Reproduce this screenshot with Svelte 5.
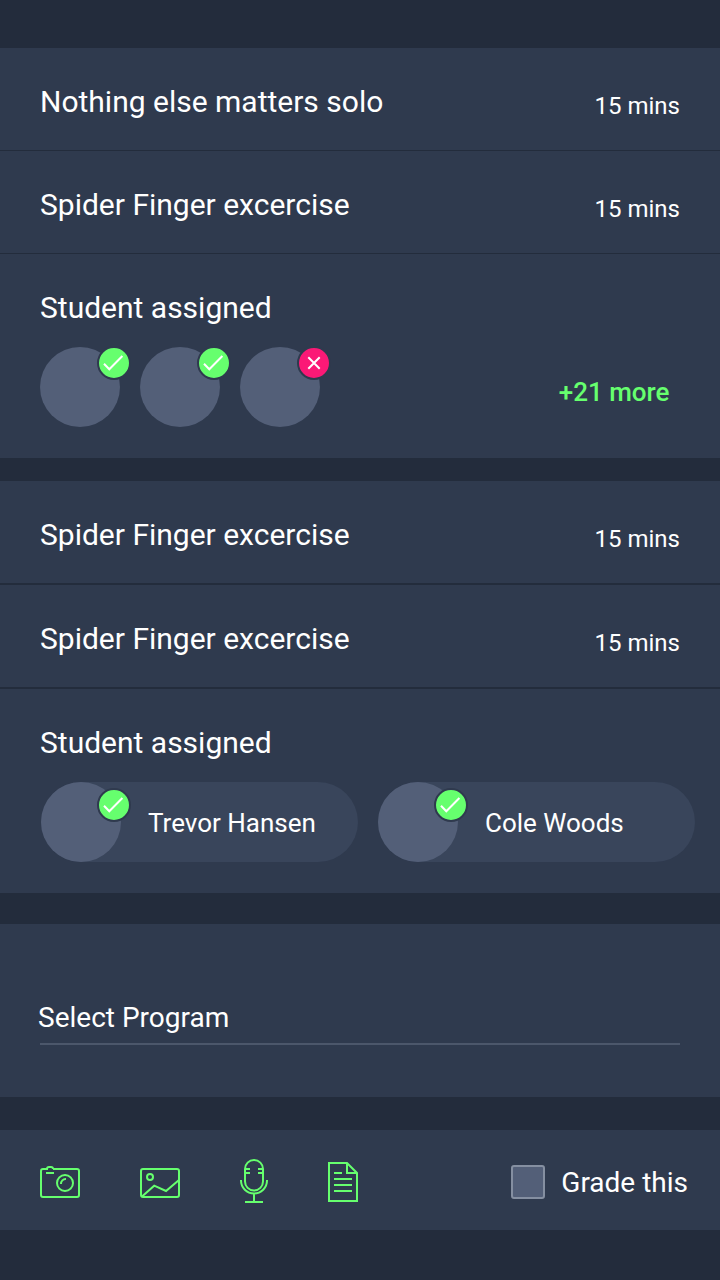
<script>
  const avatars = [true, true, false];
  const students = ['Trevor Hansen', 'Cole Woods'];
</script>

{#snippet badge(done)}
  <svg class="badge" viewBox="0 0 34 34" fill="none">
    <circle cx="17" cy="17" r="16" fill={done ? '#66ff6e' : '#fb1976'} stroke="#2f3a4e" stroke-width="2" />
    {#if done}
      <path d="M7 17.700 12.300 23.200 25.400 10" stroke="#fff" stroke-width="2" />
    {:else}
      <path d="M11.3 11.3 22.7 22.7M22.7 11.3 11.3 22.7" stroke="#fff" stroke-width="2" />
    {/if}
  </svg>
{/snippet}

{#snippet exercise(name)}
  <div class="row">
    <span class="title">{name}</span>
    <span class="mins">15 mins</span>
  </div>
{/snippet}

<main>
  <section class="card">
    {@render exercise('Nothing else matters solo')}
    {@render exercise('Spider Finger excercise')}
    <div class="assigned">
      <div class="title">Student assigned</div>
      <div class="people">
        <div class="avatars">
          {#each avatars as done}
            <div class="avatar">{@render badge(done)}</div>
          {/each}
        </div>
        <span class="more">+21 more</span>
      </div>
    </div>
  </section>

  <section class="card second">
    {@render exercise('Spider Finger excercise')}
    {@render exercise('Spider Finger excercise')}
    <div class="assigned">
      <div class="title">Student assigned</div>
      <div class="chips">
        {#each students as name}
          <div class="chip">
            <div class="avatar">{@render badge(true)}</div>
            <span>{name}</span>
          </div>
        {/each}
      </div>
    </div>
  </section>

  <section class="card program">
    <div class="select">Select Program</div>
  </section>

  <section class="card toolbar">
    <svg width="40" height="46" viewBox="0 0 40 46">
      <path d="M13 12H37a2 2 0 0 1 2 2V38a2 2 0 0 1-2 2H3a2 2 0 0 1-2-2V14a2 2 0 0 1 2-2H7C7 10.7 7.8 10 9 10H11C12.200 10 13 10.700 13 12M6 16H14" />
      <circle cx="25" cy="26" r="8" />
      <path d="M21 27a4.700 4.700 0 0 1 5-5" />
    </svg>
    <svg width="40" height="46" viewBox="0 0 40 46">
      <rect x="1" y="12" width="38" height="28" rx="2" />
      <circle cx="10" cy="20" r="3" />
      <path d="M2 39.500 14.200 28.700 26 34 39 23" />
    </svg>
    <svg width="28" height="46" viewBox="0 0 28 46">
      <rect x="5" y="3" width="18" height="30.500" rx="9" />
      <path d="M1 23v.5a13 13 0 0 0 26 0V23M14 36.500V45M5 45H23M5 12h5M5 16h5M18 12h5M18 16h5" />
    </svg>
    <svg width="30" height="46" viewBox="0 0 30 46">
      <path d="M1 6H19L29 16V44H1ZM19 6V16H29M6 16H14M6 22H24M6 28H24M6 34H24" />
    </svg>
    <div class="grade"><i></i><span>Grade this</span></div>
  </section>
</main>

<style>
  :global(body) { background: #232c3c; }
  main {
    box-sizing: border-box;
    width: 720px;
    height: 1280px;
    padding-top: 48px;
    overflow: hidden;
    background: #232c3c;
    color: #fff;
    font-family: Roboto, sans-serif;
  }
  .card { --line: 1px; background: #2f3a4e; }
  .second { --line: 2px; margin-top: 23px; }
  .row {
    display: flex;
    justify-content: space-between;
    height: 66px;
    padding: 36px 40px 0;
    border-bottom: var(--line) solid #232c3c;
  }
  .title { font-size: 30px; line-height: 36px; }
  .mins { padding-top: 8px; font-size: 24px; line-height: 28px; }
  .assigned { box-sizing: border-box; height: 204px; padding: 36px 25px 0 40px; }
  .people { display: flex; justify-content: space-between; margin-top: 21px; }
  .avatars { display: flex; gap: 20px; }
  .avatar {
    position: relative;
    flex: none;
    width: 80px;
    height: 80px;
    border-radius: 50%;
    background: #535f78;
  }
  .badge { position: absolute; left: 57px; top: -1px; width: 34px; height: 34px; }
  .chip .badge { left: 56px; top: 6px; }
  .more {
    padding: 30px 25.5px 0 0;
    color: #66ff6e;
    font-size: 26px;
    font-weight: 500;
    line-height: 30px;
  }
  .chips { display: flex; gap: 20px; margin: 21px 0 0 1px; }
  .chip {
    display: flex;
    align-items: center;
    gap: 27px;
    width: 317px;
    flex: none;
    height: 80px;
    border-radius: 40px;
    background: #39455b;
    font-size: 26px;
    line-height: 30px;
  }
  .chip span { padding-top: 2px; }
  .program { box-sizing: border-box; height: 173px; margin-top: 31px; padding: 77px 40px 0; }
  .select {
    height: 42px;
    border-bottom: 2px solid #4c576b;
    font-size: 28px;
    line-height: 34px;
    text-indent: -2px;
  }
  .toolbar {
    display: flex;
    align-items: center;
    gap: 60px;
    box-sizing: border-box;
    height: 100px;
    margin-top: 33px;
    padding: 0 32px 0 40px;
  }
  .toolbar > svg { fill: none; stroke: #66ff6e; stroke-width: 2; flex: none; }
  .grade {
    display: flex;
    align-items: center;
    gap: 16px;
    margin-left: auto;
    padding-top: 4px;
    font-size: 28px;
    line-height: 34px;
  }
  .grade span { padding-top: 1px; margin-bottom: -1px; }
  .grade i {
    box-sizing: border-box;
    width: 34px;
    height: 34px;
    border: 2px solid #858fa1;
    border-radius: 3px;
    background: #535f78;
  }
</style>
